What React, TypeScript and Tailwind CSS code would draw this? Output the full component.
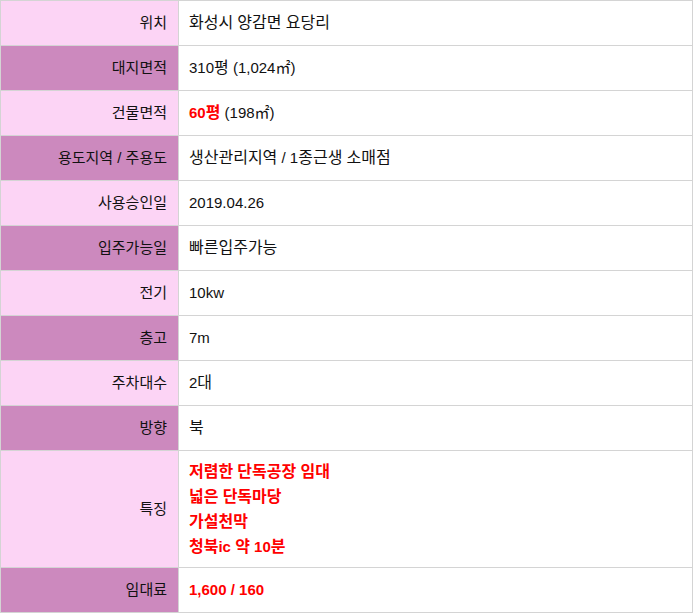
import type { ReactNode } from "react";

// hangul runs in the value column are set a touch larger than the latin text, like the original page
function Ko({ text }: { text: string }) {
  const parts = text.split(/([\uAC00-\uD7A3]+)/);
  return (
    <>
      {parts.map((p, i) =>
        /[\uAC00-\uD7A3]/.test(p) ? (
          <span key={i} className="text-[16px]">
            {p}
          </span>
        ) : (
          <span key={i}>{p}</span>
        )
      )}
    </>
  );
}

const rows: { label: string; value: ReactNode; dark: boolean }[] = [
  { label: "위치", value: <Ko text="화성시 양감면 요당리" />, dark: false },
  { label: "대지면적", value: <Ko text="310평 (1,024㎡)" />, dark: true },
  {
    label: "건물면적",
    value: (
      <>
        <b className="text-[#ff0000]">
          <Ko text="60평" />
        </b>{" "}
        (198㎡)
      </>
    ),
    dark: false,
  },
  { label: "용도지역 / 주용도", value: <Ko text="생산관리지역 / 1종근생 소매점" />, dark: true },
  { label: "사용승인일", value: "2019.04.26", dark: false },
  { label: "입주가능일", value: <Ko text="빠른입주가능" />, dark: true },
  { label: "전기", value: "10kw", dark: false },
  { label: "층고", value: "7m", dark: true },
  { label: "주차대수", value: <Ko text="2대" />, dark: false },
  { label: "방향", value: <Ko text="북" />, dark: true },
];

const features = ["저렴한 단독공장 임대", "넓은 단독마당", "가설천막", "청북ic 약 10분"];

export default function App() {
  return (
    <div className="w-[693px] bg-white font-['Liberation_Sans','Noto_Sans_CJK_KR',sans-serif] text-[15px] text-[#111]">
      <div className="border border-[#d4d4d4]">
        {rows.map((r) => (
          <div key={r.label} className="flex h-[45px] border-b border-[#d4d4d4]">
            <div
              className={`flex w-[178px] shrink-0 items-center justify-end border-r border-[#d4d4d4] pr-[11px] ${
                r.dark ? "bg-[#cc89be]" : "bg-[#fcd4f5]"
              }`}
            >
              {r.label}
            </div>
            <div className="flex items-center pl-[10px]">
              <span>{r.value}</span>
            </div>
          </div>
        ))}
        <div className="flex h-[117px] border-b border-[#d4d4d4]">
          <div className="flex w-[178px] shrink-0 items-center justify-end border-r border-[#d4d4d4] bg-[#fcd4f5] pr-[11px]">
            특징
          </div>
          <div className="flex flex-col justify-center pl-[10px] font-bold leading-[25px] text-[#ff0000]">
            {features.map((f) => (
              <span key={f}>
                <Ko text={f} />
              </span>
            ))}
          </div>
        </div>
        <div className="flex h-[44px]">
          <div className="flex w-[178px] shrink-0 items-center justify-end border-r border-[#d4d4d4] bg-[#cc89be] pr-[11px]">
            임대료
          </div>
          <div className="flex items-center pl-[10px] font-bold text-[#ff0000]">1,600 / 160</div>
        </div>
      </div>
    </div>
  );
}
